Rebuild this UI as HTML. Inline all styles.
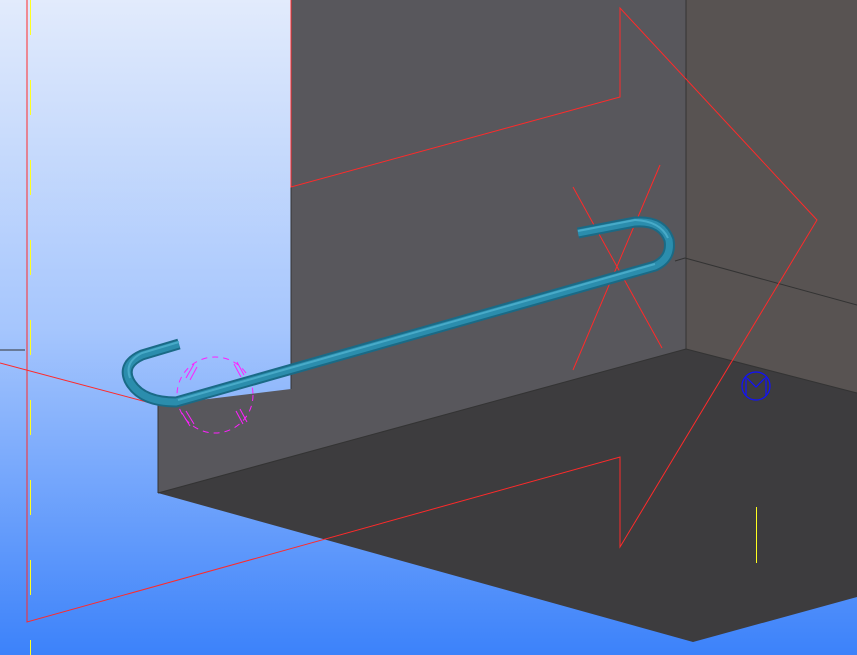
<!DOCTYPE html>
<html><head><style>html,body{margin:0;padding:0;overflow:hidden}body{width:857px;height:655px}</style></head><body>
<svg width="857" height="655" viewBox="0 0 857 655" xmlns="http://www.w3.org/2000/svg" style="display:block">
<defs>
<linearGradient id="bg" x1="0" y1="0" x2="0" y2="1">
<stop offset="0" stop-color="#e2ebfc"/><stop offset="0.5" stop-color="#a6c6fd"/><stop offset="1" stop-color="#3c82fa"/>
</linearGradient>
</defs>
<rect width="857" height="655" fill="url(#bg)"/>
<polygon points="686,0 857,0 857,393 686,349" fill="#585352"/>
<polygon points="291,0 686,0 686,349 158,493 158,405 291,389" fill="#58575c"/>
<polygon points="158,493 686,349 857,393 857,597 693,642" fill="#3d3c3e"/>
<g stroke="#333" stroke-width="1" fill="none">
<line x1="686" y1="0" x2="686" y2="349"/>
<line x1="675" y1="261" x2="685" y2="258"/>
<line x1="685" y1="258" x2="857" y2="305"/>
<line x1="158" y1="493" x2="686" y2="349"/>
<line x1="686" y1="349" x2="857" y2="393"/>
<line x1="158" y1="405" x2="158" y2="493"/>
<line x1="291" y1="187" x2="291" y2="389"/>
<line x1="0" y1="350" x2="25" y2="350"/>
</g>
<g stroke="#ff2a2a" stroke-width="1" fill="none">
<polyline points="27,0 27,622 620,457 620,547 817,220 620,8 620,97 291,187 291,0"/>
<line x1="0" y1="363" x2="158" y2="405"/>
<line x1="573" y1="187" x2="662" y2="348"/>
<line x1="660" y1="165" x2="573" y2="370"/>
</g>
<line x1="30.5" y1="0" x2="30.5" y2="655" stroke="#ffff20" stroke-width="1" stroke-dasharray="35,45"/>
<line x1="756.5" y1="507" x2="756.5" y2="563" stroke="#ffff20" stroke-width="1"/>
<g stroke="#1010ff" stroke-width="1.2" fill="none">
<circle cx="756" cy="386" r="14"/>
<polyline points="746,377 746,396"/><polyline points="766,377 766,396"/><polyline points="747,378 756,387 765,378"/>
</g>
<g stroke="#ff20ff" stroke-width="1" fill="none">
<ellipse cx="215" cy="395" rx="38" ry="38" stroke-dasharray="6,5"/>
<line x1="186" y1="378" x2="194" y2="364"/><line x1="190" y1="380" x2="197" y2="367"/>
<line x1="234" y1="364" x2="241" y2="377"/><line x1="237" y1="362" x2="244" y2="375"/>
<line x1="182" y1="413" x2="190" y2="426"/><line x1="186" y1="411" x2="194" y2="424"/>
<line x1="236" y1="411" x2="243" y2="424"/><line x1="240" y1="409" x2="247" y2="422"/>
</g>
<path d="M179,344 L142,355 Q122,364 129,380 Q140,402 176,402 L655,266 Q672,258 669,240 Q662,220 635,222 L578,233" stroke="#1a6a86" stroke-width="11" fill="none" stroke-linejoin="round"/>
<path d="M179,344 L142,355 Q122,364 129,380 Q140,402 176,402 L655,266 Q672,258 669,240 Q662,220 635,222 L578,233" stroke="#2b8dad" stroke-width="7" fill="none" stroke-linejoin="round"/>
<path d="M179,342 L142,353 Q124,362 130,378 M178,400 L655,264 M668,238 Q660,221 635,220 L578,231" stroke="#48aac8" stroke-width="2" fill="none"/>
</svg>
</body></html>
